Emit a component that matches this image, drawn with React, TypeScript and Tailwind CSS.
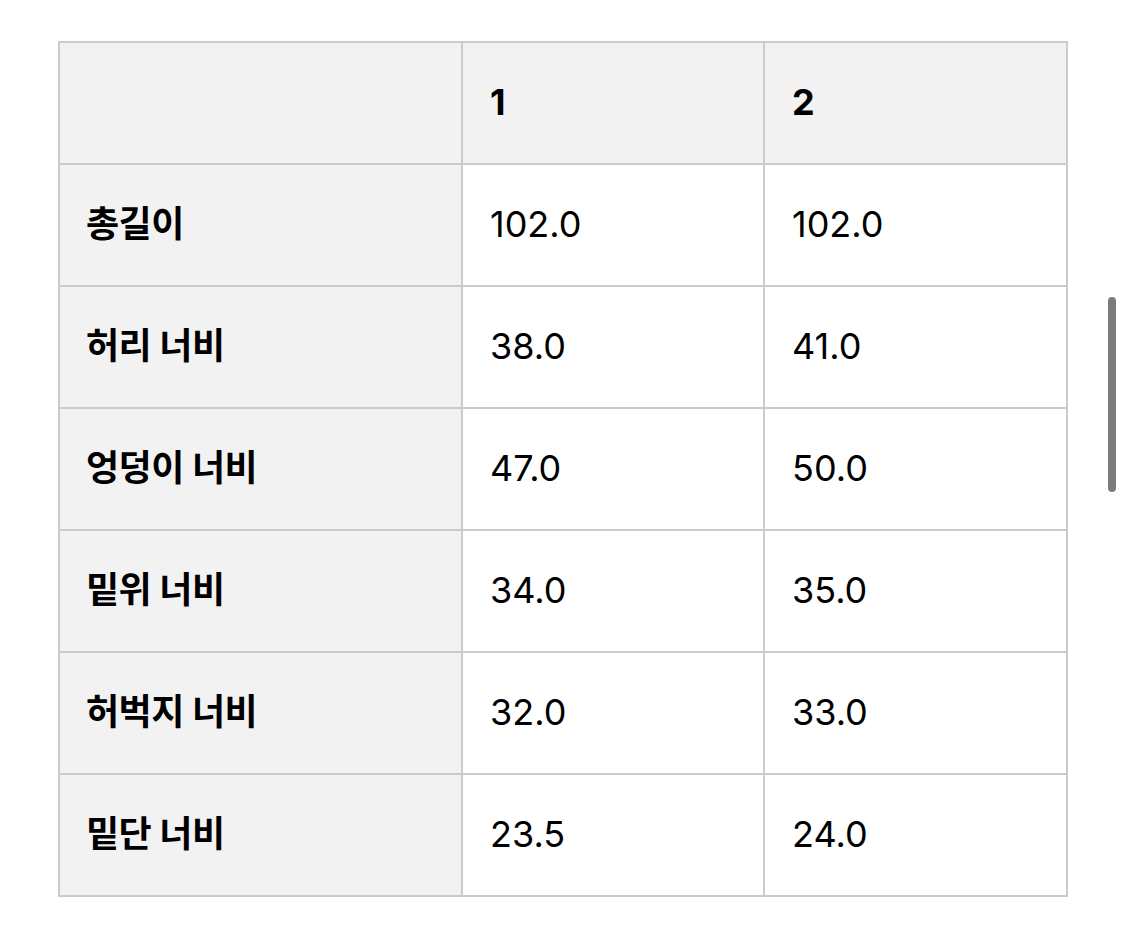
import React from 'react';

const rows: [string, string, string][] = [
  ['총길이', '102.0', '102.0'],
  ['허리 너비', '38.0', '41.0'],
  ['엉덩이 너비', '47.0', '50.0'],
  ['밑위 너비', '34.0', '35.0'],
  ['허벅지 너비', '32.0', '33.0'],
  ['밑단 너비', '23.5', '24.0'],
];

const font = { fontFamily: 'Inter, "Noto Sans CJK KR", sans-serif' };

export default function App() {
  return (
    <div className="relative w-[1125px] h-[928px] bg-white text-black" style={font}>
      <div className="pt-[41px] pl-[58px]">
        <table className="border-collapse table-fixed w-[1008px] text-[36px] leading-none">
          <colgroup>
            <col className="w-[403px]" />
            <col className="w-[302px]" />
            <col className="w-[303px]" />
          </colgroup>
          <thead>
            <tr className="h-[122px] bg-[#f2f2f2]">
              <th className="border-2 border-[#cbcbcb]" />
              <th className="border-2 border-[#cbcbcb] text-left pl-[27px] pb-[3px] font-bold">1</th>
              <th className="border-2 border-[#cbcbcb] text-left pl-[27px] pb-[3px] font-bold">2</th>
            </tr>
          </thead>
          <tbody>
            {rows.map(([label, a, b]) => (
              <tr key={label} className="h-[122px]">
                <td className="border-2 border-[#cbcbcb] bg-[#f2f2f2] pl-[26px] pb-[3px] font-bold tracking-[-0.5px]">
                  {label}
                </td>
                <td className="border-2 border-[#cbcbcb] pl-[27px] pb-[3px]">{a}</td>
                <td className="border-2 border-[#cbcbcb] pl-[27px] pb-[3px]">{b}</td>
              </tr>
            ))}
          </tbody>
        </table>
      </div>
      <div className="absolute left-[1108px] top-[297px] w-[8px] h-[195px] rounded-full bg-[#7c7c7c]" />
    </div>
  );
}
